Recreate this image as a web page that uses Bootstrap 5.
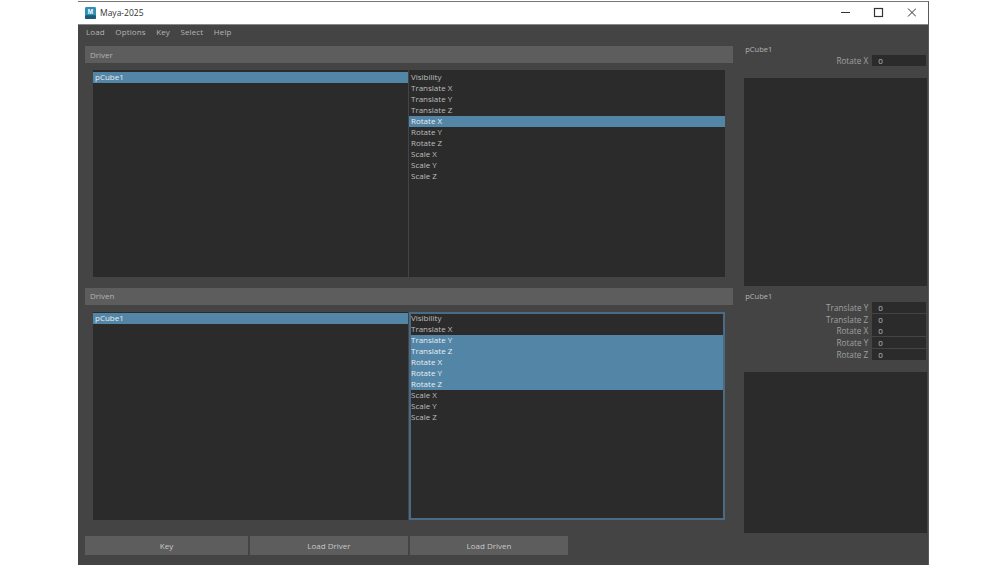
<!DOCTYPE html>
<html><head><meta charset="utf-8">
<link href="https://cdn.jsdelivr.net/npm/bootstrap@5.3.0/dist/css/bootstrap.min.css" rel="stylesheet">
<style>
html,body{height:565px;overflow:hidden;background:#fff;}
body{font-family:"Open Sans","Liberation Sans",sans-serif;font-size:8px;color:#bdbdbd;}
.win{margin-left:78px;width:851px;height:564px;margin-top:1px;background:#444;border-right:1px solid #5a5a5a;border-top:1px solid #777;}
.tbar{height:23px;background:#fff;color:#333;font-size:8.5px;padding-left:7px;border-bottom:1px solid #888;}
.mbar{height:15px;padding-left:8px;padding-bottom:2px;gap:10.5px;font-size:8px;letter-spacing:.12px;color:#b4b4b4;}
.leftc{width:658px;padding-left:7px;}
.rightc{width:193px;padding-left:9px;padding-top:4px;}
.hdr{height:17px;background:#5d5d5d;width:648px;padding-left:5px;line-height:17px;color:#b4b4b4;margin-top:6px;}
.hdr2{margin-top:11px;line-height:16px;}
.lists{height:207px;margin:7px 0 0 8px;width:632px;gap:1px;}
.lists.two{height:208px;margin-top:7px;}
.pane{background:#2b2b2b;width:315px;padding-top:2px;}
.pane.w2{width:316px;}
.lists.two .pane{padding-top:1px;}
.pane.focus{outline:2px solid #4a6a86;outline-offset:-2px;padding-left:1px;}
.itm{height:11px;line-height:10px;padding-left:2px;white-space:nowrap;color:#bdbdbd;}
.pane.focus .itm{padding-left:1px;}
.itm.sel{background:#5285a6;color:#e8eef2;}
.btns{margin-top:16px;gap:2px;}
.bt{height:19px;background:#5d5d5d;border:0;border-radius:0;color:#c8c8c8;font-size:8px;line-height:19px;text-align:center;padding:0;}
.bk{width:163px;}
.bl{width:158px;}
.slabel{font-size:7.5px;height:12px;line-height:12px;padding-left:1px;color:#b4b4b4;}
.s0{margin-top:-1px;}
.frow{height:11px;margin-bottom:.75px;gap:4px;}
.flab{width:124px;text-align:right;color:#a0a0a0;line-height:11px;font-size:8.2px;white-space:nowrap;}
.fval{width:54px;height:11px;background:#2b2b2b;line-height:11px;padding-left:6px;color:#bdbdbd;}
.dark{background:#2b2b2b;width:183px;}
.d1{height:208px;margin-top:11px;}
.d2{height:161px;margin-top:11px;}
.s2{margin-top:4px;}
.ttl{width:100%;}
.tsp{width:12px;flex:none;}
.ctl{flex:none;}
.ico{flex:none;margin-right:4px;}
</style></head><body>
<div class="win d-flex flex-column">
  <div class="tbar d-flex align-items-center flex-shrink-0">
    <svg class="ico" width="11" height="12" viewBox="0 0 12 13"><rect width="12" height="13" rx="1.5" fill="#2f8fb5"/><rect y="9" width="12" height="4" rx="1" fill="#1c5a78"/><text x="6" y="8" text-anchor="middle" font-size="7" font-weight="700" fill="#fff" font-family="Liberation Sans">M</text></svg>
    <span class="ttl">Maya-2025</span>
    <svg class="ctl" width="100" height="22" viewBox="0 0 100 22" fill="none" stroke="#333" stroke-width="1"><path d="M25 10.5h9"/><rect x="58.5" y="6.5" width="8" height="8" stroke-width="1.2"/><path d="M92 6.5l8 8m0-8l-8 8"/></svg>
    <span class="tsp"></span>
  </div>
  <div class="mbar d-flex align-items-center flex-shrink-0"><span>Load</span><span>Options</span><span>Key</span><span>Select</span><span>Help</span></div>
  <div class="d-flex flex-grow-1">
    <div class="leftc d-flex flex-column">
      <div class="hdr">Driver</div>
      <div class="lists d-flex">
        <div class="pane"><div class="itm sel">pCube1</div></div>
        <div class="pane w2">
          <div class="itm">Visibility</div><div class="itm">Translate X</div><div class="itm">Translate Y</div><div class="itm">Translate Z</div>
          <div class="itm sel">Rotate X</div><div class="itm">Rotate Y</div><div class="itm">Rotate Z</div>
          <div class="itm">Scale X</div><div class="itm">Scale Y</div><div class="itm">Scale Z</div>
        </div>
      </div>
      <div class="hdr hdr2">Driven</div>
      <div class="lists two d-flex">
        <div class="pane"><div class="itm sel">pCube1</div></div>
        <div class="pane w2 focus">
          <div class="itm">Visibility</div><div class="itm">Translate X</div><div class="itm sel">Translate Y</div><div class="itm sel">Translate Z</div>
          <div class="itm sel">Rotate X</div><div class="itm sel">Rotate Y</div><div class="itm sel">Rotate Z</div>
          <div class="itm">Scale X</div><div class="itm">Scale Y</div><div class="itm">Scale Z</div>
        </div>
      </div>
      <div class="btns d-flex">
        <button class="bt bk">Key</button>
        <button class="bt bl">Load Driver</button>
        <button class="bt bl">Load Driven</button>
      </div>
    </div>
    <div class="rightc d-flex flex-column">
      <div class="slabel s0">pCube1</div>
      <div class="frow d-flex"><div class="flab">Rotate X</div><div class="fval">0</div></div>
      <div class="dark d1"></div>
      <div class="slabel s2">pCube1</div>
      <div class="frow d-flex"><div class="flab">Translate Y</div><div class="fval">0</div></div>
      <div class="frow d-flex"><div class="flab">Translate Z</div><div class="fval">0</div></div>
      <div class="frow d-flex"><div class="flab">Rotate X</div><div class="fval">0</div></div>
      <div class="frow d-flex"><div class="flab">Rotate Y</div><div class="fval">0</div></div>
      <div class="frow d-flex"><div class="flab">Rotate Z</div><div class="fval">0</div></div>
      <div class="dark d2"></div>
    </div>
  </div>
</div>
<script src="https://cdn.jsdelivr.net/npm/bootstrap@5.3.0/dist/js/bootstrap.bundle.min.js"></script>
</body></html>
